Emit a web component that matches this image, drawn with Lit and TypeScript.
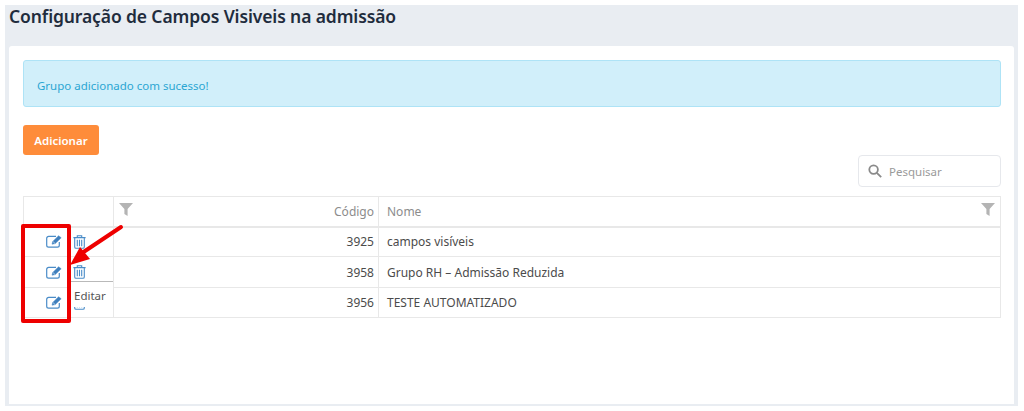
import { LitElement, html, css, svg } from "lit";
import { customElement } from "lit/decorators.js";

const editIcon = html`<svg class="ico" width="17" height="13" viewBox="0 0 17 13" fill="none" stroke="#4a8cc8" stroke-width="1.2"><path d="M10 1.4H2.6A1.9 1.9 0 0 0 .7 3.3v7a1.9 1.9 0 0 0 1.9 1.9h8.8a1.9 1.9 0 0 0 1.9-1.9V7"/><path d="M6 9.2l.7-2.7L12.6.7l2.6 2.1-5.9 5.8z" fill="#3f7fbd" stroke-width=".5"/><path d="M7.2 6.8l1.6 1.4" stroke="#fff" stroke-width=".7"/></svg>`;
const trashIcon = html`<svg class="ico" width="13" height="14" viewBox="0 0 13 14" fill="none" stroke="#4a8cc8" stroke-width="1.1"><path d="M.4 2.6h12.2M4.3 2.4V.8h4.4v1.6"/><path d="M1.7 2.8v9.2a1.3 1.3 0 0 0 1.3 1.3h7a1.3 1.3 0 0 0 1.3-1.3V2.8"/><path d="M4.3 4.8v6.4M6.5 4.8v6.4M8.7 4.8v6.4"/></svg>`;
const funnel = html`<svg width="14" height="13" viewBox="0 0 14 13"><path d="M0 0h14L8.6 6v7L5.4 11V6z" fill="#b4b4b4"/></svg>`;

const rows = [
  ["3925", "campos visíveis"],
  ["3958", "Grupo RH – Admissão Reduzida"],
  ["3956", "TESTE AUTOMATIZADO"],
];

@customElement("app-root")
export class AppRoot extends LitElement {
  static styles = css`
    :host { display: block; width: 1024px; height: 411px; background: #fff; overflow: hidden; position: relative; font-family: "Noto Sans", "Open Sans", sans-serif; }
    .panel { margin: 5px 6px 0 5px; height: 401px; background: #e9edf2; padding: 0 4px 2px 4px; box-sizing: border-box; display: flex; flex-direction: column; }
    h1 { margin: 0; height: 41px; font-size: 17.5px; line-height: 23px; font-weight: 600; color: #1f2c3d; letter-spacing: -.12px; }
    .card { flex: 1; background: #fff; border-radius: 3px 3px 0 0; padding: 14px 13px 0 14px; display: flex; flex-direction: column; }
    .alert { height: 47px; box-sizing: border-box; background: #d1effa; border: 1px solid #aee3f6; border-radius: 3px; padding: 3px 13px 0; display: flex; align-items: center; font-size: 11.5px; color: #2ba6d2; }
    .add { margin-top: 18px; align-self: flex-start; width: 76px; height: 30px; border: 0; border-radius: 3px; background: #fe8c3a; color: #fff; font: 600 11.5px "Noto Sans", sans-serif; padding: 0; }
    .searchrow { display: flex; justify-content: flex-end; }
    .search { width: 143px; height: 32px; box-sizing: border-box; border: 1px solid #e6e8ec; border-radius: 4px; display: flex; align-items: center; gap: 7px; padding-left: 9px; font-size: 11.5px; color: #9a9a9a; }
    table { margin-top: 9px; width: 978px; border-collapse: collapse; table-layout: fixed; font-size: 12px; color: #4b4b4b; }
    th, td { border: 1px solid #e8e8e8; padding: 0 4px 0 8px; height: 30px; box-sizing: border-box; font-weight: 400; text-align: left; }
    thead th { height: 30px; border-bottom-width: 2px; color: #8c8c8c; position: relative; }
    tbody tr:nth-child(2) td { height: 31px; }
    .num { text-align: right; }
    .fl { position: absolute; top: 6px; left: 5px; display: flex; }
    .fr { position: absolute; top: 6px; right: 5px; display: flex; }
    td.actions { padding: 0 0 0 22px; }
    .actions div { display: flex; gap: 10px; align-items: center; }
    .ico { flex: none; display: block; }
    .tip { position: absolute; left: 69px; top: 281px; width: 44px; height: 26px; box-sizing: border-box; background: #fff; border-top: 1px solid #b9b9b9; padding: 6px 0 0 5px; font-size: 11.5px; line-height: 15px; color: #555; }
    .mark { position: absolute; left: 21px; top: 224px; width: 50px; height: 99px; box-sizing: border-box; border: 4px solid #ee0000; border-radius: 2px; }
    .arrow { position: absolute; left: 0; top: 0; pointer-events: none; }
  `;

  render() {
    return html`
      <div class="panel">
        <h1>Configuração de Campos Visiveis na admissão</h1>
        <div class="card">
          <div class="alert">Grupo adicionado com sucesso!</div>
          <button class="add">Adicionar</button>
          <div class="searchrow">
            <div class="search">
              <svg width="14" height="14" viewBox="0 0 14 14" fill="none" stroke="#8a8a8a" stroke-width="1.8"><circle cx="5.6" cy="5.6" r="4.3"/><path d="M8.8 8.8l4.4 4.4"/></svg>
              <span>Pesquisar</span>
            </div>
          </div>
          <table>
            <colgroup><col style="width:90px"/><col style="width:265px"/><col/></colgroup>
            <thead><tr>
              <th></th>
              <th class="num"><span class="fl">${funnel}</span>Código</th>
              <th>Nome<span class="fr">${funnel}</span></th>
            </tr></thead>
            <tbody>
              ${rows.map(([c, n]) => html`<tr>
                <td class="actions"><div>${editIcon}${trashIcon}</div></td>
                <td class="num">${c}</td>
                <td>${n}</td>
              </tr>`)}
            </tbody>
          </table>
        </div>
      </div>
      <div class="tip">Editar</div>
      <div class="mark"></div>
      <svg class="arrow" width="1024" height="411" viewBox="0 0 1024 411">
        ${svg`<path d="M121 227L82 253" stroke="#ee0000" stroke-width="4" stroke-linecap="round"/><path d="M70 265L80 247 90 259z" fill="#ee0000"/>`}
      </svg>
    `;
  }
}
